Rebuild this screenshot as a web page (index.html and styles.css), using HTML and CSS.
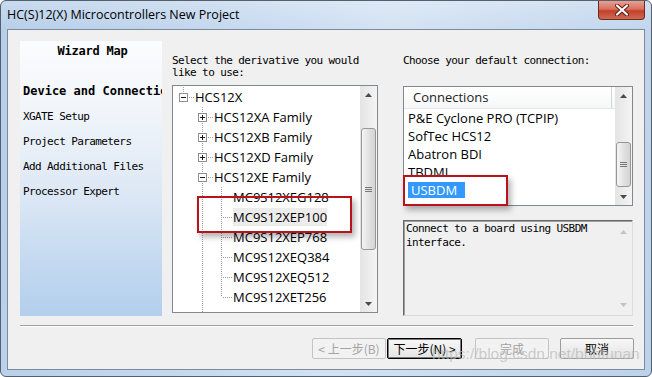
FILE: index.html
```html
<!DOCTYPE html>
<html>
<head>
  <title>HC(S)12(X) Microcontrollers New Project</title>
  <link rel="stylesheet" href="styles.css">
</head>
<body>
  <div class="window">
    <div class="titlebar">
      <span class="title">HC(S)12(X) Microcontrollers New Project</span>
      <div class="close">
        <svg width="16" height="12" viewBox="0 0 16 12">
          <path d="M3 1.5l10 9M13 1.5l-10 9" stroke="#5a1c14" stroke-width="4" stroke-linecap="round"/>
          <path d="M3 1.5l10 9M13 1.5l-10 9" stroke="#fff" stroke-width="2.2" stroke-linecap="round"/>
        </svg>
      </div>
    </div>

    <div class="client">
      <div class="content">
        <div class="wizard-map">
          <div class="wizard-title">Wizard Map</div>
          <div class="step current">Device and Connections</div>
          <div class="step">XGATE Setup</div>
          <div class="step">Project Parameters</div>
          <div class="step">Add Additional Files</div>
          <div class="step">Processor Expert</div>
        </div>

        <div class="pane pane-derivative">
          <p class="label">Select the derivative you would<br>like to use:</p>
          <div class="tree">
            <div class="tree-rows">
              <div class="row">
                <span class="cell ell up"><svg class="box" width="9" height="9"><rect x=".5" y=".5" width="8" height="8" fill="#fff" stroke="#8e8f8f"/><path d="M2 4.5h5" stroke="#1a1a1a"/></svg></span>
                <span class="text">HCS12X</span>
              </div>
              <div class="row">
                <span class="cell"></span>
                <span class="cell tee"><svg class="box" width="9" height="9"><rect x=".5" y=".5" width="8" height="8" fill="#fff" stroke="#8e8f8f"/><path d="M2 4.5h5M4.5 2v5" stroke="#1a1a1a"/></svg></span>
                <span class="text">HCS12XA Family</span>
              </div>
              <div class="row">
                <span class="cell"></span>
                <span class="cell tee"><svg class="box" width="9" height="9"><rect x=".5" y=".5" width="8" height="8" fill="#fff" stroke="#8e8f8f"/><path d="M2 4.5h5M4.5 2v5" stroke="#1a1a1a"/></svg></span>
                <span class="text">HCS12XB Family</span>
              </div>
              <div class="row">
                <span class="cell"></span>
                <span class="cell tee"><svg class="box" width="9" height="9"><rect x=".5" y=".5" width="8" height="8" fill="#fff" stroke="#8e8f8f"/><path d="M2 4.5h5M4.5 2v5" stroke="#1a1a1a"/></svg></span>
                <span class="text">HCS12XD Family</span>
              </div>
              <div class="row">
                <span class="cell"></span>
                <span class="cell tee"><svg class="box" width="9" height="9"><rect x=".5" y=".5" width="8" height="8" fill="#fff" stroke="#8e8f8f"/><path d="M2 4.5h5" stroke="#1a1a1a"/></svg></span>
                <span class="text">HCS12XE Family</span>
              </div>
              <div class="row">
                <span class="cell"></span><span class="cell pipe"></span><span class="cell tee"></span>
                <span class="text">MC9S12XEG128</span>
              </div>
              <div class="row">
                <span class="cell"></span><span class="cell pipe"></span><span class="cell tee"></span>
                <span class="text hot">MC9S12XEP100</span>
              </div>
              <div class="row">
                <span class="cell"></span><span class="cell pipe"></span><span class="cell tee"></span>
                <span class="text">MC9S12XEP768</span>
              </div>
              <div class="row">
                <span class="cell"></span><span class="cell pipe"></span><span class="cell tee"></span>
                <span class="text">MC9S12XEQ384</span>
              </div>
              <div class="row">
                <span class="cell"></span><span class="cell pipe"></span><span class="cell tee"></span>
                <span class="text">MC9S12XEQ512</span>
              </div>
              <div class="row">
                <span class="cell"></span><span class="cell pipe"></span><span class="cell ell"></span>
                <span class="text">MC9S12XET256</span>
              </div>
              <div class="row">
                <span class="cell"></span>
                <span class="cell tee"><svg class="box" width="9" height="9"><rect x=".5" y=".5" width="8" height="8" fill="#fff" stroke="#8e8f8f"/><path d="M2 4.5h5M4.5 2v5" stroke="#1a1a1a"/></svg></span>
                <span class="text">HCS12XF Family</span>
              </div>
            </div>
            <div class="scrollbar">
              <div class="arrow"><svg width="7" height="4"><path d="M0 4L3.5 0L7 4z" fill="#4a4a4a"/></svg></div>
              <div class="thumb thumb-tree"><svg width="7" height="5"><path d="M0 .5h7M0 2.5h7M0 4.5h7" stroke="#777"/></svg></div>
              <div class="track"></div>
              <div class="arrow"><svg width="7" height="4"><path d="M0 0L3.5 4L7 0z" fill="#4a4a4a"/></svg></div>
            </div>
          </div>
        </div>

        <div class="pane pane-connection">
          <p class="label">Choose your default connection:</p>
          <div class="list">
            <div class="list-body">
              <div class="list-header"><span class="header-cell">Connections</span></div>
              <div class="item">P&amp;E Cyclone PRO (TCPIP)</div>
              <div class="item">SofTec HCS12</div>
              <div class="item">Abatron BDI</div>
              <div class="item">TBDMI</div>
              <div class="item"><span class="selected">USBDM</span></div>
            </div>
            <div class="scrollbar">
              <div class="arrow"><svg width="7" height="4"><path d="M0 4L3.5 0L7 4z" fill="#4a4a4a"/></svg></div>
              <div class="thumb thumb-list"><svg width="7" height="5"><path d="M0 .5h7M0 2.5h7M0 4.5h7" stroke="#777"/></svg></div>
              <div class="track"></div>
              <div class="arrow"><svg width="7" height="4"><path d="M0 0L3.5 4L7 0z" fill="#4a4a4a"/></svg></div>
            </div>
          </div>
          <div class="desc">
            <p class="desc-text">Connect to a board using USBDM<br>interface.</p>
            <div class="desc-arrows">
              <svg width="7" height="4"><path d="M0 4L3.5 0L7 4z" fill="#c4c4c4"/></svg>
              <svg width="7" height="4"><path d="M0 0L3.5 4L7 0z" fill="#c4c4c4"/></svg>
            </div>
          </div>
        </div>
      </div>

      <div class="separator"></div>

      <div class="buttons">
        <button class="btn btn-back" disabled>&lt; 上一步(B)</button>
        <button class="btn btn-next">下一步(N) &gt;</button>
        <button class="btn btn-finish" disabled>完成</button>
        <button class="btn btn-cancel">取消</button>
      </div>
    </div>

    <div class="mark mark-tree"></div>
    <div class="mark mark-conn"></div>
    <div class="watermark">https://blog.csdn.net/bhhfunan</div>
  </div>
</body>
</html>
```

FILE: styles.css
```css
body {
  margin: 0;
  background: #fff;
}

.window {
  position: relative;
  width: 652px;
  height: 377px;
  box-sizing: border-box;
  border: 1px solid #56606c;
  border-radius: 6px;
  overflow: hidden;
  background:
    linear-gradient(to bottom, rgba(255, 255, 255, 0.25), rgba(255, 255, 255, 0) 30px),
    linear-gradient(100deg, #b6cee9 0%, #c3d7ee 30%, #d3e2f3 55%, #c9dbef 75%, #bcd2eb 100%);
  font-family: "Open Sans", sans-serif;
}

/* title bar */
.titlebar {
  display: flex;
  align-items: flex-start;
  height: 28px;
}

.title {
  margin: 6px 0 0 6px;
  font-size: 12.5px;
  line-height: 16px;
  color: #000;
}

.close {
  display: flex;
  align-items: center;
  justify-content: center;
  width: 45px;
  height: 18px;
  margin: 0 6px 0 auto;
  border: 1px solid #6e2a20;
  border-top: none;
  border-radius: 0 0 4px 4px;
  background: linear-gradient(to bottom, #e8a093 0%, #d8705e 45%, #c2402a 55%, #d06a52 100%);
}

/* client area */
.client {
  height: 341px;
  margin: 0 6px;
  box-sizing: border-box;
  border: 1px solid #7d8a99;
  background: #f0f0f0;
}

.content {
  display: flex;
  align-items: flex-start;
  height: 275px;
  padding: 11px 0 0 12px;
}

.wizard-map {
  width: 142px;
  height: 275px;
  box-sizing: border-box;
  padding: 3px 0 0 3px;
  overflow: hidden;
  background: linear-gradient(to bottom, #fbfcfe 0%, #f1f5fa 25%, #dde8f5 55%, #c4d9f0 80%, #b3cfed 100%);
  font-family: "DejaVu Sans Mono", monospace;
}

.wizard-title {
  font-weight: bold;
  font-size: 12px;
  line-height: 14px;
  text-align: center;
  letter-spacing: -0.2px;
}

.step {
  height: 25px;
  line-height: 25px;
  font-size: 11px;
  letter-spacing: -0.6px;
  white-space: nowrap;
}

.step.current {
  margin-top: 21px;
  font-weight: bold;
  font-size: 12px;
  letter-spacing: 0;
}

.pane {
  display: flex;
  flex-direction: column;
}

.pane-derivative {
  width: 206px;
  margin-left: 10px;
}

.pane-connection {
  width: 230px;
  margin-left: 25px;
}

.label {
  margin: 14px 0 0 0;
  font-family: "DejaVu Sans Mono", monospace;
  font-size: 11px;
  letter-spacing: -0.6px;
  line-height: 12px;
  white-space: nowrap;
}

/* tree */
.tree {
  display: flex;
  height: 228px;
  margin-top: 6px;
  box-sizing: border-box;
  border: 1px solid #828790;
  background: #fff;
  overflow: hidden;
}

.tree-rows {
  flex: 1;
  padding: 1px 0 0 1px;
  overflow: hidden;
}

.row {
  display: flex;
  align-items: center;
  height: 20px;
  font-size: 13px;
  white-space: nowrap;
}

.cell {
  position: relative;
  display: flex;
  align-items: center;
  justify-content: center;
  flex: none;
  width: 19px;
  height: 20px;
}

.pipe::before,
.tee::before,
.ell::before {
  content: "";
  position: absolute;
  left: 9px;
  top: 0;
  width: 1px;
  height: 20px;
  background: linear-gradient(to bottom, #a0a0a0 50%, transparent 50%) 0 0 / 1px 2px repeat-y;
}

.ell::before {
  height: 10px;
}

.tee::after,
.ell::after {
  content: "";
  position: absolute;
  left: 10px;
  right: -2px;
  top: 10px;
  height: 1px;
  background: linear-gradient(to right, transparent 50%, #a0a0a0 50%) 0 0 / 2px 1px repeat-x;
}

.box {
  position: relative;
  z-index: 1;
}

.text {
  margin-left: 2px;
  color: #000;
}

.text.hot {
  background: #ececec;
}

/* scrollbars */
.scrollbar {
  display: flex;
  flex-direction: column;
  flex: none;
  width: 17px;
  background: linear-gradient(to right, #e4e4e4, #f4f4f4);
}

.arrow {
  display: flex;
  align-items: center;
  justify-content: center;
  height: 17px;
}

.thumb {
  display: flex;
  align-items: center;
  justify-content: center;
  margin: 0 1px;
  border: 1px solid #979797;
  border-radius: 3px;
  background: linear-gradient(to right, #f5f5f5, #e2e2e2 50%, #d4d4d4);
}

.thumb-tree {
  height: 120px;
  margin-top: 25px;
}

.thumb-list {
  height: 43px;
  margin-top: 38px;
}

.track {
  flex: 1;
}

/* connection list */
.list {
  display: flex;
  height: 120px;
  margin-top: 19px;
  box-sizing: border-box;
  border: 1px solid #828790;
  background: #fff;
}

.list-body {
  flex: 1;
  overflow: hidden;
  font-size: 13px;
}

.list-header {
  display: flex;
  height: 21px;
  border-bottom: 1px solid #e5e5e5;
  background: linear-gradient(to bottom, #fff, #f6f7f8);
}

.header-cell {
  width: 198px;
  padding-left: 9px;
  line-height: 21px;
  border-right: 1px solid #d5d5d5;
  color: #1e1e1e;
}

.item {
  height: 18px;
  line-height: 18px;
  padding-left: 4px;
  white-space: nowrap;
}

.selected {
  display: inline-block;
  padding: 0 8px 0 3px;
  line-height: 16px;
  margin-top: 1px;
  background: #3399ff;
  color: #fff;
}

/* description */
.desc {
  display: flex;
  height: 96px;
  margin-top: 14px;
  box-sizing: border-box;
  border: 1px solid;
  border-color: #6a6a6a #dcdcdc #dcdcdc #6a6a6a;
  box-shadow: inset 1px 1px 0 #a0a0a0;
  background: #f0f0f0;
}

.desc-text {
  flex: 1;
  margin: 1px 0 0 2px;
  font-family: "DejaVu Sans Mono", monospace;
  font-size: 11px;
  letter-spacing: -0.6px;
  line-height: 14px;
}

.desc-arrows {
  display: flex;
  flex-direction: column;
  justify-content: space-between;
  width: 17px;
  padding: 9px 0 8px 0;
  align-items: center;
}

/* bottom */
.separator {
  height: 1px;
  margin: 9px 11px 0 12px;
  border-top: 1px solid #a0a0a0;
  background: #fff;
}

.buttons {
  display: flex;
  justify-content: flex-end;
  padding: 11px 10px 0 0;
}

.btn {
  width: 74px;
  height: 21px;
  padding: 0;
  border: 1px solid #9c9c9c;
  border-radius: 2px;
  background: linear-gradient(to bottom, #f7f7f7, #e4e4e4);
  font-family: "Noto Sans CJK SC", sans-serif;
  font-size: 12px;
  line-height: 18px;
  color: #000;
}

.btn:disabled {
  border-color: #c4c4c4;
  background: #f2f2f2;
  color: #a3a3a3;
}

.btn-next {
  width: 75px;
  margin-left: 1px;
  border: 1px solid #000;
  box-shadow: inset 0 0 0 1px #7a7a7a;
}

.btn-finish {
  margin-left: 13px;
}

.btn-cancel {
  margin-left: 11px;
}

/* annotations laid over the dialog */
.mark {
  position: absolute;
  border: 2px solid #b8121c;
  box-shadow: 3px 4px 6px rgba(0, 0, 0, 0.3);
}

.mark-tree {
  left: 196px;
  top: 195px;
  width: 151px;
  height: 33px;
}

.mark-conn {
  left: 402px;
  top: 174px;
  width: 101px;
  height: 27px;
}

.watermark {
  position: absolute;
  left: 431px;
  top: 344px;
  font-family: "Liberation Sans", sans-serif;
  font-size: 15.5px;
  color: rgba(185, 185, 185, 0.7);
  white-space: nowrap;
}
```
